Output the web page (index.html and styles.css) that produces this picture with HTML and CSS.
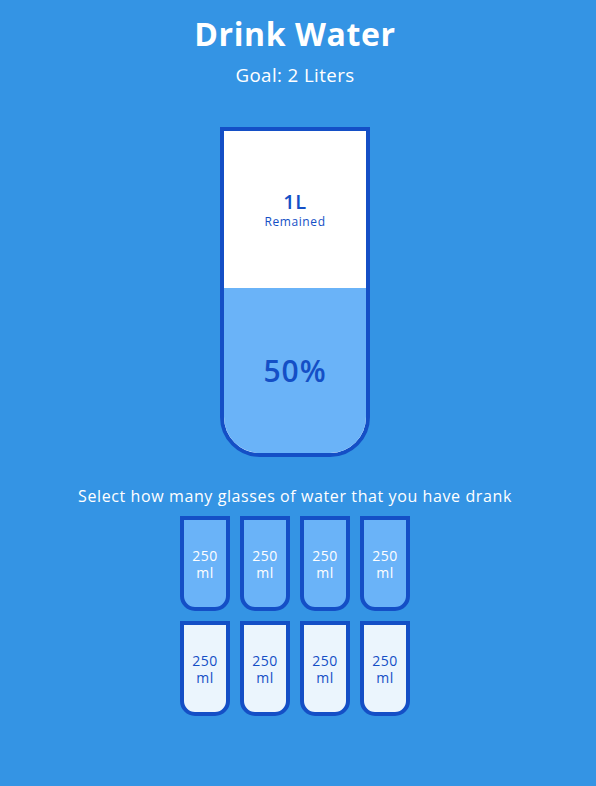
FILE: index.html
```html
<!DOCTYPE html>
<html lang="en">
<head>
    <meta charset="UTF-8">
    <meta name="viewport" content="width=device-width, initial-scale=1.0">
    <title>Drink Water</title>
    <link rel="stylesheet" href="styles.css">
</head>
<body>
    <h1>Drink Water</h1>
    <h3>Goal: 2 Liters</h3>

    <div class="cup">
        <div class="remained">
            <span class="liters">1L</span>
            <small>Remained</small>
        </div>
        <div class="percentage" style="height: 165px;">50%</div>
    </div>

    <p class="text">Select how many glasses of water that you have drank</p>

    <div class="cups">
        <div class="cup cup-small full">250 ml</div>
        <div class="cup cup-small full">250 ml</div>
        <div class="cup cup-small full">250 ml</div>
        <div class="cup cup-small full">250 ml</div>
        <div class="cup cup-small">250 ml</div>
        <div class="cup cup-small">250 ml</div>
        <div class="cup cup-small">250 ml</div>
        <div class="cup cup-small">250 ml</div>
    </div>
</body>
</html>
```

FILE: styles.css
```css
* {
    box-sizing: border-box;
}

body {
    background-color: #3494e4;
    color: #fff;
    font-family: "Open Sans", sans-serif;
    display: flex;
    flex-direction: column;
    align-items: center;
    margin: 0;
    padding-right: 6px;
    min-height: 100vh;
}

h1 {
    font-size: 32px;
    line-height: 40px;
    margin: 14px 0 0;
    letter-spacing: 0.6px;
}

h3 {
    font-size: 18.72px;
    font-weight: 400;
    line-height: 22px;
    margin: 10px 0 11px;
    letter-spacing: 0.4px;
}

.cup {
    background-color: #fff;
    border: 4px solid #144fc6;
    color: #144fc6;
    border-radius: 0 0 40px 40px;
    height: 330px;
    width: 150px;
    margin: 30px 0;
    display: flex;
    flex-direction: column;
    overflow: hidden;
}

.remained {
    display: flex;
    flex-direction: column;
    align-items: center;
    justify-content: center;
    text-align: center;
    flex: 1;
}

.liters {
    font-size: 20px;
    font-weight: 600;
    line-height: 24px;
    letter-spacing: 0.5px;
}

.remained small {
    font-size: 12px;
    line-height: 15px;
    letter-spacing: 0.6px;
}

.percentage {
    background-color: #6ab3f8;
    display: flex;
    align-items: center;
    justify-content: center;
    font-weight: 600;
    font-size: 30px;
    letter-spacing: 1px;
}

.text {
    font-size: 16px;
    line-height: 19px;
    text-align: center;
    margin: 0 0 5px;
    letter-spacing: 0.6px;
}

.cups {
    display: flex;
    flex-wrap: wrap;
    align-items: center;
    justify-content: center;
    width: 280px;
}

.cup.cup-small {
    height: 95px;
    width: 50px;
    border-radius: 0 0 15px 15px;
    background-color: rgba(255, 255, 255, 0.9);
    font-size: 14px;
    line-height: 17px;
    letter-spacing: 0.5px;
    align-items: center;
    justify-content: center;
    text-align: center;
    margin: 5px;
    padding: 0 6px;
}

.cup.cup-small.full {
    background-color: #6ab3f8;
    color: #fff;
}
```
